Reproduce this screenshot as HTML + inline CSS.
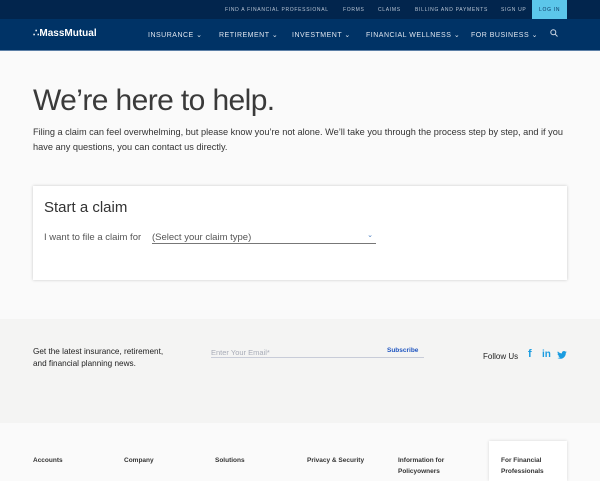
<!DOCTYPE html>
<html><head><style>
*{margin:0;padding:0;box-sizing:border-box}
body{width:600px;height:480px;overflow:hidden;font-family:"Liberation Sans",sans-serif;background:#fafafa;position:relative;color:#333}
.a{position:absolute;white-space:nowrap}
.top{position:absolute;left:0;top:0;width:600px;height:19px;background:#02254d}
.top span{position:absolute;top:7px;font-size:5px;letter-spacing:.7px;color:#b8c4d4}
.login{position:absolute;left:532px;top:0;width:35px;height:19px;background:#5cc6ea}
.nav{position:absolute;left:0;top:19px;width:600px;height:32px;background:#003366;border-bottom:1px solid #5c7fa6}
.nav span.n{position:absolute;top:12px;font-size:7px;letter-spacing:.5px;color:#dfe6ef}
.foot{position:absolute;left:0;top:319px;width:600px;height:104px;background:#f4f4f3}
.fl{position:absolute;top:455px;font-size:6.5px;font-weight:bold;color:#333;line-height:11px}
</style></head><body>
<div class="top">
<span style="left:225px">FIND A FINANCIAL PROFESSIONAL</span>
<span style="left:343px">FORMS</span>
<span style="left:378px">CLAIMS</span>
<span style="left:415px">BILLING AND PAYMENTS</span>
<span style="left:501px">SIGN UP</span>
</div>
<div class="login"><span class="a" style="left:7px;top:7px;font-size:5px;letter-spacing:.7px;color:#0c3a66">LOG IN</span></div>
<div class="nav">
<span class="a" style="left:33px;top:9px;font-size:10px;font-weight:bold;color:#fff">∴MassMutual</span>
<span class="n" style="left:148px">INSURANCE ⌄</span>
<span class="n" style="left:219px">RETIREMENT ⌄</span>
<span class="n" style="left:292px">INVESTMENT ⌄</span>
<span class="n" style="left:366px">FINANCIAL WELLNESS ⌄</span>
<span class="n" style="left:471px">FOR BUSINESS ⌄</span>
<svg class="a" style="left:550px;top:10px" width="8" height="8" viewBox="0 0 8 8"><circle cx="3.3" cy="3.3" r="2.5" fill="none" stroke="#cdd8e5" stroke-width="1"/><path d="M5.2 5.2L7.5 7.5" stroke="#cdd8e5"/></svg>
</div>
<div class="a" style="left:33px;top:84px;font-size:30px;font-weight:300;color:#3a3a3a;letter-spacing:-.6px">We’re here to help.</div>
<div class="a" style="left:33px;top:125px;font-size:9.2px;line-height:14.5px;color:#333;white-space:nowrap">Filing a claim can feel overwhelming, but please know you’re not alone. We’ll take you through the process step by step, and if you<br>have any questions, you can contact us directly.</div>
<div class="a" style="left:33px;top:186px;width:534px;height:94px;background:#fff;box-shadow:0 0 3px rgba(0,0,0,.2)"></div>
<div class="a" style="left:44px;top:199px;font-size:15px;color:#333">Start a claim</div>
<div class="a" style="left:44px;top:232px;font-size:9.5px;color:#555">I want to file a claim for</div>
<div class="a" style="left:152px;top:232px;width:224px;height:12px;border-bottom:1px solid #777;font-size:9.5px;color:#555">(Select your claim type)<span style="position:absolute;right:3px;top:-1px;font-size:7px;color:#4a7fc1">⌄</span></div>
<div class="foot"></div>
<div class="a" style="left:33px;top:346px;font-size:8.2px;line-height:11.5px;color:#222">Get the latest insurance, retirement,<br>and financial planning news.</div>
<div class="a" style="left:211px;top:348px;width:213px;height:10px;border-bottom:1px solid #c8ccd8;font-size:7.5px;color:#a8acb8">Enter Your Email*</div>
<div class="a" style="left:387px;top:347px;font-size:6.5px;font-weight:bold;color:#1f55c0">Subscribe</div>
<div class="a" style="left:483px;top:352px;font-size:8px;color:#222">Follow Us</div>
<div class="a" style="left:528px;top:348px;font-size:11px;font-weight:bold;color:#1a9ce0">f</div>
<div class="a" style="left:542px;top:349px;font-size:10px;font-weight:bold;color:#1a9ce0">in</div>
<svg class="a" style="left:557px;top:351px" width="10" height="8" viewBox="0 0 24 20"><path d="M24 2.4a10 10 0 0 1-2.8.8 5 5 0 0 0 2.2-2.7 10 10 0 0 1-3.1 1.2A4.9 4.9 0 0 0 11.9 6 14 14 0 0 1 1.7.9a4.9 4.9 0 0 0 1.5 6.6A5 5 0 0 1 1 6.9a4.9 4.9 0 0 0 3.9 4.8 5 5 0 0 1-2.2.1 4.9 4.9 0 0 0 4.6 3.4A9.9 9.9 0 0 1 0 17.3 14 14 0 0 0 7.5 19.5c9 0 14-7.5 14-14v-.6A10 10 0 0 0 24 2.4z" fill="#1a9ce0"/></svg>
<div class="a" style="left:489px;top:441px;width:78px;height:40px;background:#fff;box-shadow:0 0 3px rgba(0,0,0,.15)"></div>
<div class="fl" style="left:33px">Accounts</div>
<div class="fl" style="left:124px">Company</div>
<div class="fl" style="left:215px">Solutions</div>
<div class="fl" style="left:307px">Privacy &amp; Security</div>
<div class="fl" style="left:398px">Information for<br>Policyowners</div>
<div class="fl" style="left:501px">For Financial<br>Professionals</div>
</body></html>
